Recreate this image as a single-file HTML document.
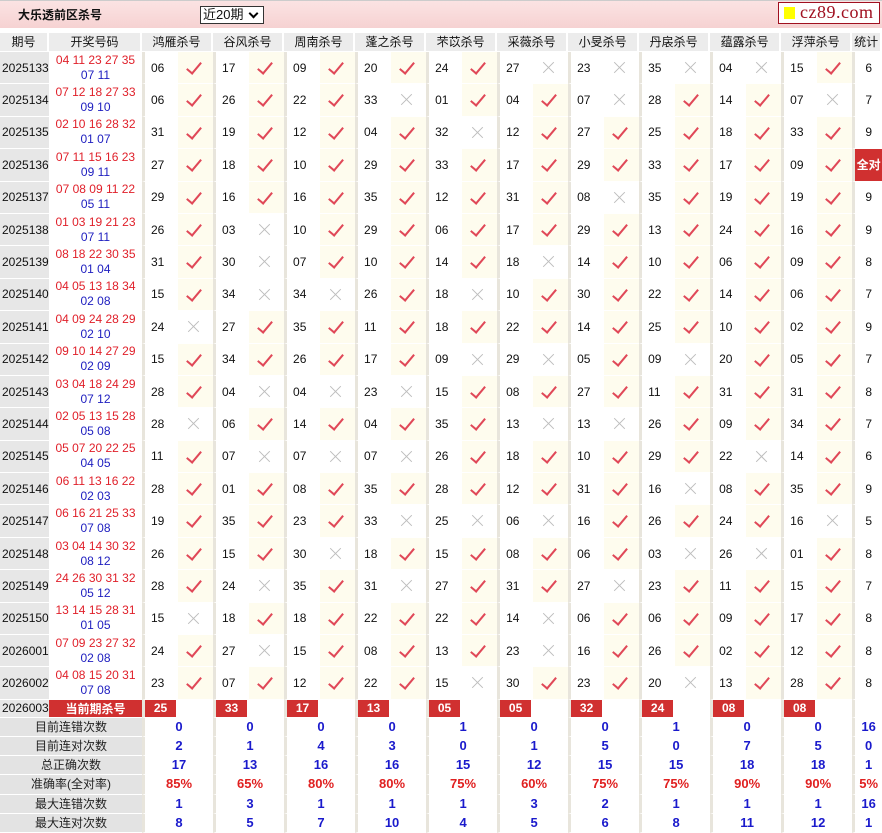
<!DOCTYPE html>
<html><head><meta charset="utf-8"><style>
body{margin:0;width:882px;height:833px;overflow:hidden;background:#fff;font-family:"Liberation Sans","Noto Sans CJK SC",sans-serif;font-size:12px;color:#111}
.top{position:relative;height:28px;background:linear-gradient(#fbe3e3,#f6d2d2);border-top:1px solid #ccc;box-sizing:border-box}
.top .tt{position:absolute;left:18px;top:5px;font-weight:bold;font-size:12px}
.top .sel{position:absolute;left:200px;top:5px;width:60px;height:16px;border:1px solid #333;background:#fff;font-size:13px;line-height:16px;padding-left:2px;box-sizing:content-box}
.top .sel:after{content:"";position:absolute;right:6px;top:3px;width:5px;height:5px;border-right:2px solid #000;border-bottom:2px solid #000;transform:rotate(45deg)}
.logo{position:absolute;left:778px;top:1px;width:100px;height:20px;border:1px solid #a01020;background:#fff}
.logo i{position:absolute;left:5px;top:4px;width:11px;height:12px;background:#ff0}
.logo span{position:absolute;left:21px;top:-1px;font-family:"Liberation Serif",serif;font-size:18px;color:#a01020;letter-spacing:0.5px}
table{border-collapse:separate;border-spacing:0;table-layout:fixed;width:882px;margin-top:5px}
td{padding:0;text-align:center;border-bottom:1px solid #fff;box-sizing:border-box;white-space:nowrap;overflow:hidden}
tr.h td{height:19px;background:#ececec;border-right:2px solid #fff;font-size:12px;line-height:18px}
tr.d td{height:32.4px}
.q{background:#e7e7e7;text-align:left;padding-left:2px}
.k{line-height:15px}.k i{display:block;font-style:normal;color:#e0202a}.k b{display:block;font-weight:normal;color:#2020c0}
.n{border-left:3px solid #e8e5dc;text-align:left;padding-left:6px}
.y,.x{position:relative}
.y{background:#fefcee}
.y:after{content:"";position:absolute;left:12px;top:7px;width:6px;height:13px;border-right:2px solid #e04858;border-bottom:2px solid #e04858;transform:rotate(40deg)}
.x:before,.x:after{content:"";position:absolute;left:8px;top:15px;width:15px;height:1px;background:#bdbdbd;transform:rotate(45deg)}
.x:after{transform:rotate(-45deg)}
.t{border-left:3px solid #e8e5dc}
.all{background:#d03030;color:#fff;font-weight:bold}
tr.c td{height:18px}
.cur{background:#d03030;color:#fff;font-weight:bold}
.rb{display:block;width:31px;height:17px;line-height:17px;background:#d03030;color:#fff;font-weight:bold;margin-left:-6px;text-align:center}
tr.s td{height:19.2px;line-height:18px;font-weight:bold;color:#1a1acc;font-size:13px}
tr.s td.l{background:#e3e3e3;color:#222;font-weight:normal;font-size:12px}
tr.s td.v{border-left:3px solid #e8e5dc}
tr.p td{color:#e02020}
</style></head><body>
<div class="top"><div class="tt">大乐透前区杀号</div><div class="sel">近20期</div><div class="logo"><i></i><span>cz89.com</span></div></div>
<table>
<colgroup><col style="width:49px"><col style="width:93px"><col span="20" style="width:35.5px"><col style="width:30px"></colgroup>
<tr class="h"><td>期号</td><td>开奖号码</td><td colspan=2>鸿雁杀号</td><td colspan=2>谷风杀号</td><td colspan=2>周南杀号</td><td colspan=2>蓬之杀号</td><td colspan=2>芣苡杀号</td><td colspan=2>采薇杀号</td><td colspan=2>小旻杀号</td><td colspan=2>丹扆杀号</td><td colspan=2>蕴露杀号</td><td colspan=2>浮萍杀号</td><td>统计</td></tr>
<tr class="d"><td class=q>2025133</td><td class=k><i>04 11 23 27 35</i><b>07 11</b></td><td class=n>06</td><td class=y></td><td class=n>17</td><td class=y></td><td class=n>09</td><td class=y></td><td class=n>20</td><td class=y></td><td class=n>24</td><td class=y></td><td class=n>27</td><td class=x></td><td class=n>23</td><td class=x></td><td class=n>35</td><td class=x></td><td class=n>04</td><td class=x></td><td class=n>15</td><td class=y></td><td class=t>6</td></tr>
<tr class="d"><td class=q>2025134</td><td class=k><i>07 12 18 27 33</i><b>09 10</b></td><td class=n>06</td><td class=y></td><td class=n>26</td><td class=y></td><td class=n>22</td><td class=y></td><td class=n>33</td><td class=x></td><td class=n>01</td><td class=y></td><td class=n>04</td><td class=y></td><td class=n>07</td><td class=x></td><td class=n>28</td><td class=y></td><td class=n>14</td><td class=y></td><td class=n>07</td><td class=x></td><td class=t>7</td></tr>
<tr class="d"><td class=q>2025135</td><td class=k><i>02 10 16 28 32</i><b>01 07</b></td><td class=n>31</td><td class=y></td><td class=n>19</td><td class=y></td><td class=n>12</td><td class=y></td><td class=n>04</td><td class=y></td><td class=n>32</td><td class=x></td><td class=n>12</td><td class=y></td><td class=n>27</td><td class=y></td><td class=n>25</td><td class=y></td><td class=n>18</td><td class=y></td><td class=n>33</td><td class=y></td><td class=t>9</td></tr>
<tr class="d"><td class=q>2025136</td><td class=k><i>07 11 15 16 23</i><b>09 11</b></td><td class=n>27</td><td class=y></td><td class=n>18</td><td class=y></td><td class=n>10</td><td class=y></td><td class=n>29</td><td class=y></td><td class=n>33</td><td class=y></td><td class=n>17</td><td class=y></td><td class=n>29</td><td class=y></td><td class=n>33</td><td class=y></td><td class=n>17</td><td class=y></td><td class=n>09</td><td class=y></td><td class="t all">全对</td></tr>
<tr class="d"><td class=q>2025137</td><td class=k><i>07 08 09 11 22</i><b>05 11</b></td><td class=n>29</td><td class=y></td><td class=n>16</td><td class=y></td><td class=n>16</td><td class=y></td><td class=n>35</td><td class=y></td><td class=n>12</td><td class=y></td><td class=n>31</td><td class=y></td><td class=n>08</td><td class=x></td><td class=n>35</td><td class=y></td><td class=n>19</td><td class=y></td><td class=n>19</td><td class=y></td><td class=t>9</td></tr>
<tr class="d"><td class=q>2025138</td><td class=k><i>01 03 19 21 23</i><b>07 11</b></td><td class=n>26</td><td class=y></td><td class=n>03</td><td class=x></td><td class=n>10</td><td class=y></td><td class=n>29</td><td class=y></td><td class=n>06</td><td class=y></td><td class=n>17</td><td class=y></td><td class=n>29</td><td class=y></td><td class=n>13</td><td class=y></td><td class=n>24</td><td class=y></td><td class=n>16</td><td class=y></td><td class=t>9</td></tr>
<tr class="d"><td class=q>2025139</td><td class=k><i>08 18 22 30 35</i><b>01 04</b></td><td class=n>31</td><td class=y></td><td class=n>30</td><td class=x></td><td class=n>07</td><td class=y></td><td class=n>10</td><td class=y></td><td class=n>14</td><td class=y></td><td class=n>18</td><td class=x></td><td class=n>14</td><td class=y></td><td class=n>10</td><td class=y></td><td class=n>06</td><td class=y></td><td class=n>09</td><td class=y></td><td class=t>8</td></tr>
<tr class="d"><td class=q>2025140</td><td class=k><i>04 05 13 18 34</i><b>02 08</b></td><td class=n>15</td><td class=y></td><td class=n>34</td><td class=x></td><td class=n>34</td><td class=x></td><td class=n>26</td><td class=y></td><td class=n>18</td><td class=x></td><td class=n>10</td><td class=y></td><td class=n>30</td><td class=y></td><td class=n>22</td><td class=y></td><td class=n>14</td><td class=y></td><td class=n>06</td><td class=y></td><td class=t>7</td></tr>
<tr class="d"><td class=q>2025141</td><td class=k><i>04 09 24 28 29</i><b>02 10</b></td><td class=n>24</td><td class=x></td><td class=n>27</td><td class=y></td><td class=n>35</td><td class=y></td><td class=n>11</td><td class=y></td><td class=n>18</td><td class=y></td><td class=n>22</td><td class=y></td><td class=n>14</td><td class=y></td><td class=n>25</td><td class=y></td><td class=n>10</td><td class=y></td><td class=n>02</td><td class=y></td><td class=t>9</td></tr>
<tr class="d"><td class=q>2025142</td><td class=k><i>09 10 14 27 29</i><b>02 09</b></td><td class=n>15</td><td class=y></td><td class=n>34</td><td class=y></td><td class=n>26</td><td class=y></td><td class=n>17</td><td class=y></td><td class=n>09</td><td class=x></td><td class=n>29</td><td class=x></td><td class=n>05</td><td class=y></td><td class=n>09</td><td class=x></td><td class=n>20</td><td class=y></td><td class=n>05</td><td class=y></td><td class=t>7</td></tr>
<tr class="d"><td class=q>2025143</td><td class=k><i>03 04 18 24 29</i><b>07 12</b></td><td class=n>28</td><td class=y></td><td class=n>04</td><td class=x></td><td class=n>04</td><td class=x></td><td class=n>23</td><td class=x></td><td class=n>15</td><td class=y></td><td class=n>08</td><td class=y></td><td class=n>27</td><td class=y></td><td class=n>11</td><td class=y></td><td class=n>31</td><td class=y></td><td class=n>31</td><td class=y></td><td class=t>8</td></tr>
<tr class="d"><td class=q>2025144</td><td class=k><i>02 05 13 15 28</i><b>05 08</b></td><td class=n>28</td><td class=x></td><td class=n>06</td><td class=y></td><td class=n>14</td><td class=y></td><td class=n>04</td><td class=y></td><td class=n>35</td><td class=y></td><td class=n>13</td><td class=x></td><td class=n>13</td><td class=x></td><td class=n>26</td><td class=y></td><td class=n>09</td><td class=y></td><td class=n>34</td><td class=y></td><td class=t>7</td></tr>
<tr class="d"><td class=q>2025145</td><td class=k><i>05 07 20 22 25</i><b>04 05</b></td><td class=n>11</td><td class=y></td><td class=n>07</td><td class=x></td><td class=n>07</td><td class=x></td><td class=n>07</td><td class=x></td><td class=n>26</td><td class=y></td><td class=n>18</td><td class=y></td><td class=n>10</td><td class=y></td><td class=n>29</td><td class=y></td><td class=n>22</td><td class=x></td><td class=n>14</td><td class=y></td><td class=t>6</td></tr>
<tr class="d"><td class=q>2025146</td><td class=k><i>06 11 13 16 22</i><b>02 03</b></td><td class=n>28</td><td class=y></td><td class=n>01</td><td class=y></td><td class=n>08</td><td class=y></td><td class=n>35</td><td class=y></td><td class=n>28</td><td class=y></td><td class=n>12</td><td class=y></td><td class=n>31</td><td class=y></td><td class=n>16</td><td class=x></td><td class=n>08</td><td class=y></td><td class=n>35</td><td class=y></td><td class=t>9</td></tr>
<tr class="d"><td class=q>2025147</td><td class=k><i>06 16 21 25 33</i><b>07 08</b></td><td class=n>19</td><td class=y></td><td class=n>35</td><td class=y></td><td class=n>23</td><td class=y></td><td class=n>33</td><td class=x></td><td class=n>25</td><td class=x></td><td class=n>06</td><td class=x></td><td class=n>16</td><td class=y></td><td class=n>26</td><td class=y></td><td class=n>24</td><td class=y></td><td class=n>16</td><td class=x></td><td class=t>5</td></tr>
<tr class="d"><td class=q>2025148</td><td class=k><i>03 04 14 30 32</i><b>08 12</b></td><td class=n>26</td><td class=y></td><td class=n>15</td><td class=y></td><td class=n>30</td><td class=x></td><td class=n>18</td><td class=y></td><td class=n>15</td><td class=y></td><td class=n>08</td><td class=y></td><td class=n>06</td><td class=y></td><td class=n>03</td><td class=x></td><td class=n>26</td><td class=x></td><td class=n>01</td><td class=y></td><td class=t>8</td></tr>
<tr class="d"><td class=q>2025149</td><td class=k><i>24 26 30 31 32</i><b>05 12</b></td><td class=n>28</td><td class=y></td><td class=n>24</td><td class=x></td><td class=n>35</td><td class=y></td><td class=n>31</td><td class=x></td><td class=n>27</td><td class=y></td><td class=n>31</td><td class=y></td><td class=n>27</td><td class=x></td><td class=n>23</td><td class=y></td><td class=n>11</td><td class=y></td><td class=n>15</td><td class=y></td><td class=t>7</td></tr>
<tr class="d"><td class=q>2025150</td><td class=k><i>13 14 15 28 31</i><b>01 05</b></td><td class=n>15</td><td class=x></td><td class=n>18</td><td class=y></td><td class=n>18</td><td class=y></td><td class=n>22</td><td class=y></td><td class=n>22</td><td class=y></td><td class=n>14</td><td class=x></td><td class=n>06</td><td class=y></td><td class=n>06</td><td class=y></td><td class=n>09</td><td class=y></td><td class=n>17</td><td class=y></td><td class=t>8</td></tr>
<tr class="d"><td class=q>2026001</td><td class=k><i>07 09 23 27 32</i><b>02 08</b></td><td class=n>24</td><td class=y></td><td class=n>27</td><td class=x></td><td class=n>15</td><td class=y></td><td class=n>08</td><td class=y></td><td class=n>13</td><td class=y></td><td class=n>23</td><td class=x></td><td class=n>16</td><td class=y></td><td class=n>26</td><td class=y></td><td class=n>02</td><td class=y></td><td class=n>12</td><td class=y></td><td class=t>8</td></tr>
<tr class="d"><td class=q>2026002</td><td class=k><i>04 08 15 20 31</i><b>07 08</b></td><td class=n>23</td><td class=y></td><td class=n>07</td><td class=y></td><td class=n>12</td><td class=y></td><td class=n>22</td><td class=y></td><td class=n>15</td><td class=x></td><td class=n>30</td><td class=y></td><td class=n>23</td><td class=y></td><td class=n>20</td><td class=x></td><td class=n>13</td><td class=y></td><td class=n>28</td><td class=y></td><td class=t>8</td></tr>
<tr class="c"><td class=q>2026003</td><td class=cur>当前期杀号</td><td class=n><span class=rb>25</span></td><td></td><td class=n><span class=rb>33</span></td><td></td><td class=n><span class=rb>17</span></td><td></td><td class=n><span class=rb>13</span></td><td></td><td class=n><span class=rb>05</span></td><td></td><td class=n><span class=rb>05</span></td><td></td><td class=n><span class=rb>32</span></td><td></td><td class=n><span class=rb>24</span></td><td></td><td class=n><span class=rb>08</span></td><td></td><td class=n><span class=rb>08</span></td><td></td><td class=t></td></tr>
<tr class="s"><td class=l colspan=2>目前连错次数</td><td class=v colspan=2>0</td><td class=v colspan=2>0</td><td class=v colspan=2>0</td><td class=v colspan=2>0</td><td class=v colspan=2>1</td><td class=v colspan=2>0</td><td class=v colspan=2>0</td><td class=v colspan=2>1</td><td class=v colspan=2>0</td><td class=v colspan=2>0</td><td class=v>16</td></tr>
<tr class="s"><td class=l colspan=2>目前连对次数</td><td class=v colspan=2>2</td><td class=v colspan=2>1</td><td class=v colspan=2>4</td><td class=v colspan=2>3</td><td class=v colspan=2>0</td><td class=v colspan=2>1</td><td class=v colspan=2>5</td><td class=v colspan=2>0</td><td class=v colspan=2>7</td><td class=v colspan=2>5</td><td class=v>0</td></tr>
<tr class="s"><td class=l colspan=2>总正确次数</td><td class=v colspan=2>17</td><td class=v colspan=2>13</td><td class=v colspan=2>16</td><td class=v colspan=2>16</td><td class=v colspan=2>15</td><td class=v colspan=2>12</td><td class=v colspan=2>15</td><td class=v colspan=2>15</td><td class=v colspan=2>18</td><td class=v colspan=2>18</td><td class=v>1</td></tr>
<tr class="s p"><td class=l colspan=2>准确率(全对率)</td><td class=v colspan=2>85%</td><td class=v colspan=2>65%</td><td class=v colspan=2>80%</td><td class=v colspan=2>80%</td><td class=v colspan=2>75%</td><td class=v colspan=2>60%</td><td class=v colspan=2>75%</td><td class=v colspan=2>75%</td><td class=v colspan=2>90%</td><td class=v colspan=2>90%</td><td class=v>5%</td></tr>
<tr class="s"><td class=l colspan=2>最大连错次数</td><td class=v colspan=2>1</td><td class=v colspan=2>3</td><td class=v colspan=2>1</td><td class=v colspan=2>1</td><td class=v colspan=2>1</td><td class=v colspan=2>3</td><td class=v colspan=2>2</td><td class=v colspan=2>1</td><td class=v colspan=2>1</td><td class=v colspan=2>1</td><td class=v>16</td></tr>
<tr class="s"><td class=l colspan=2>最大连对次数</td><td class=v colspan=2>8</td><td class=v colspan=2>5</td><td class=v colspan=2>7</td><td class=v colspan=2>10</td><td class=v colspan=2>4</td><td class=v colspan=2>5</td><td class=v colspan=2>6</td><td class=v colspan=2>8</td><td class=v colspan=2>11</td><td class=v colspan=2>12</td><td class=v>1</td></tr>
</table>
</body></html>
